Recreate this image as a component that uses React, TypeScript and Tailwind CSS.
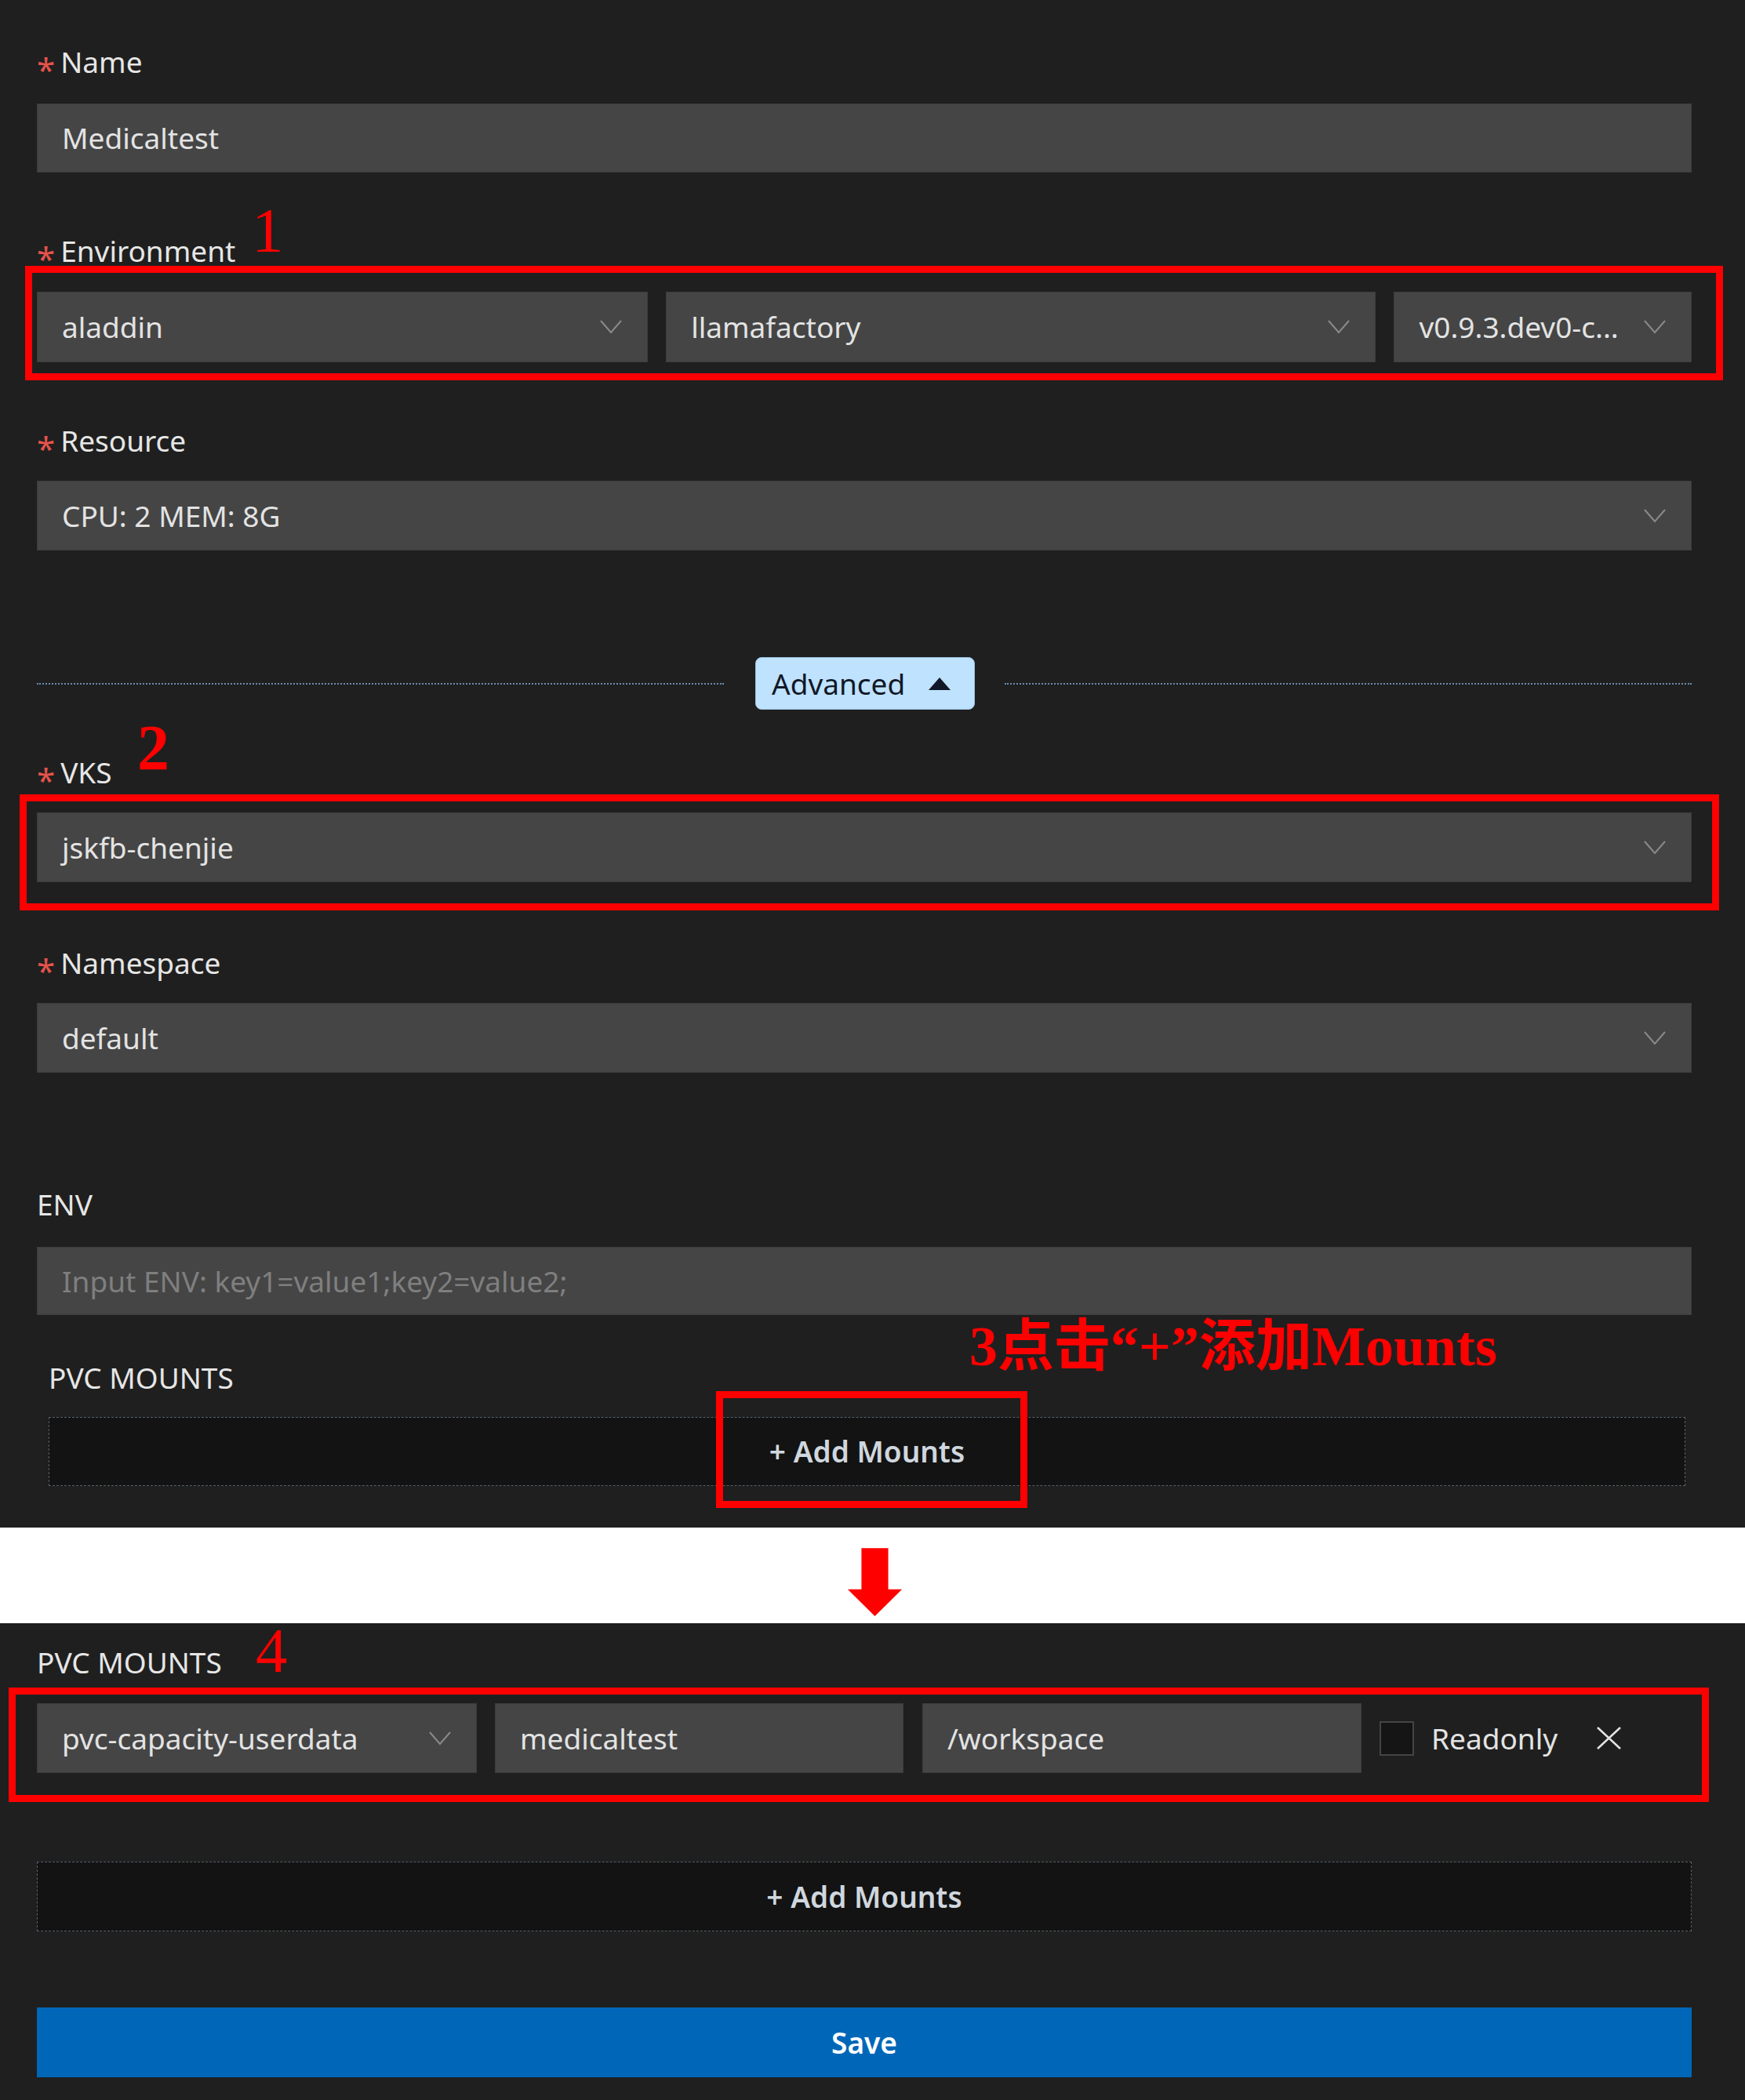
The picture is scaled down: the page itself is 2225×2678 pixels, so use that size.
import React from 'react';

function Chevron() {
  return (
    <svg width="28" height="18" viewBox="0 0 28 18" fill="none">
      <path d="M1 1 L14 16 L27 1" stroke="#8a8a8a" strokeWidth="2" />
    </svg>
  );
}

function Label({ text, required = false, className = '' }: { text: string; required?: boolean; className?: string }) {
  return (
    <div className={`h-[48px] flex items-center text-[37px] text-[#e6e6e6] ${className}`}>
      {required && <span className="text-[#e5534b] text-[42px] mr-[7px] translate-y-[9px]">*</span>}
      <span>{text}</span>
    </div>
  );
}

function Select({ value, className = '' }: { value: string; className?: string }) {
  return (
    <div className={`h-full flex items-center justify-between bg-[#454545] border border-[#3c3c3c] pl-[31px] pr-[32px] text-[37px] text-[#e3e3e3] ${className}`}>
      <span className="whitespace-nowrap">{value}</span>
      <Chevron />
    </div>
  );
}

function AddMounts({ className = '' }: { className?: string }) {
  return (
    <div className={`h-[88px] flex items-center justify-center bg-[#131313] border border-dashed border-[#56606b] text-[37px] font-semibold text-[#d0d7de] ${className}`}>
      + Add Mounts
    </div>
  );
}

export default function App() {
  return (
    <div className="relative w-[2225px] h-[2678px] bg-[#1f1f1f] font-['Noto_Sans',sans-serif] overflow-hidden">
      {/* top part of the form */}
      <div className="h-[1948px] pl-[47px] pr-[68px] pt-[55px]">
        <Label text="Name" required />
        <div className="mt-[29px] h-[88px] flex items-center bg-[#454545] border border-[#3c3c3c] pl-[31px] text-[37px] text-[#e3e3e3]">
          Medicaltest
        </div>

        <Label text="Environment" required className="mt-[76px]" />
        <div className="mt-[28px] h-[90px] grid grid-cols-[778fr_904fr_379fr] gap-[23px]">
          <Select value="aladdin" />
          <Select value="llamafactory" />
          <Select value="v0.9.3.dev0-c..." className="pl-[19px]" />
        </div>

        <Label text="Resource" required className="mt-[76px]" />
        <div className="mt-[27px] h-[89px]">
          <Select value="CPU: 2 MEM: 8G" />
        </div>

        <div className="mt-[136px] h-[67px] flex items-center">
          <div className="flex-1 border-t-2 border-dotted border-[#6a8bb0]" />
          <button className="ml-[40px] mr-[38px] w-[280px] h-full flex items-center pl-[20px] bg-[#bfe2ff] border border-[#9cc3e4] rounded-[8px] text-[37px] text-[#111827]">
            Advanced
            <svg className="ml-[30px]" width="28" height="16" viewBox="0 0 28 16">
              <polygon points="14,0 28,16 0,16" fill="#111827" />
            </svg>
          </button>
          <div className="flex-1 border-t-2 border-dotted border-[#6a8bb0]" />
        </div>

        <Label text="VKS" required className="mt-[56px]" />
        <div className="mt-[27px] h-[89px]">
          <Select value="jskfb-chenjie" />
        </div>

        <Label text="Namespace" required className="mt-[79px]" />
        <div className="mt-[27px] h-[89px]">
          <Select value="default" />
        </div>

        <Label text="ENV" className="mt-[144px]" />
        <div className="mt-[30px] h-[87px] flex items-center bg-[#454545] border border-[#3c3c3c] pl-[31px] text-[37px] text-[#7f7f7f]">
          Input ENV: key1=value1;key2=value2;
        </div>

        <Label text="PVC MOUNTS" className="mt-[56px] pl-[15px]" />
        <AddMounts className="mt-[26px] ml-[15px] mr-[8px]" />
      </div>

      {/* white band with arrow */}
      <div className="h-[122px] bg-white">
        <svg className="ml-[1076px] pt-[14px]" width="79" height="113" viewBox="0 -14 79 113">
          <polygon points="20,0 59,0 59,60 79,60 39.5,99 0,60 20,60" fill="#ff0000" />
        </svg>
      </div>

      {/* bottom part of the form */}
      <div className="pl-[47px] pr-[68px] pt-[26px]">
        <Label text="PVC MOUNTS" />
        <div className="mt-[28px] h-[89px] flex items-center">
          <div className="w-[561px] h-full">
            <Select value="pvc-capacity-userdata" />
          </div>
          <div className="ml-[23px] w-[521px] h-full flex items-center bg-[#454545] border border-[#3c3c3c] pl-[31px] text-[37px] text-[#e3e3e3]">
            medicaltest
          </div>
          <div className="ml-[24px] w-[560px] h-full flex items-center bg-[#454545] border border-[#3c3c3c] pl-[31px] text-[37px] text-[#e3e3e3]">
            /workspace
          </div>
          <div className="ml-[23px] w-[44px] h-[44px] bg-[#151515] border-2 border-[#444]" />
          <span className="ml-[22px] text-[37px] text-[#e3e3e3]">Readonly</span>
          <svg className="ml-[49px]" width="33" height="31" viewBox="0 0 33 31">
            <path d="M2 2 L31 29 M31 2 L2 29" stroke="#e3e3e3" strokeWidth="2.5" />
          </svg>
        </div>

        <AddMounts className="mt-[113px] h-[89px]" />

        <button className="mt-[97px] w-full h-[89px] bg-[#0067b8] text-white text-[37px] font-semibold">
          Save
        </button>
      </div>

      {/* red annotation boxes */}
      <div className="absolute left-[32px] top-[339px] w-[2165px] h-[146px] border-[9px] border-[#ff0000]" />
      <div className="absolute left-[25px] top-[1013px] w-[2167px] h-[148px] border-[9px] border-[#ff0000]" />
      <div className="absolute left-[913px] top-[1774px] w-[397px] h-[149px] border-[9px] border-[#ff0000]" />
      <div className="absolute left-[11px] top-[2152px] w-[2168px] h-[146px] border-[9px] border-[#ff0000]" />

      {/* red annotation numbers */}
      <div className="absolute left-[321px] top-[254px] text-[81px] leading-none text-[#ff0000] font-['Liberation_Serif',serif]">1</div>
      <div className="absolute left-[175px] top-[913px] text-[82px] leading-none font-bold text-[#ff0000] font-['Liberation_Serif',serif]">2</div>
      <div className="absolute left-[1236px] top-[1681px] text-[72px] leading-none font-bold text-[#ff0000] whitespace-nowrap font-['Liberation_Serif','Noto_Sans_CJK_SC',serif]">
        3点击“+”添加Mounts
      </div>
      <div className="absolute left-[326px] top-[2065px] text-[81px] leading-none text-[#ff0000] font-['Liberation_Serif',serif]">4</div>
    </div>
  );
}
